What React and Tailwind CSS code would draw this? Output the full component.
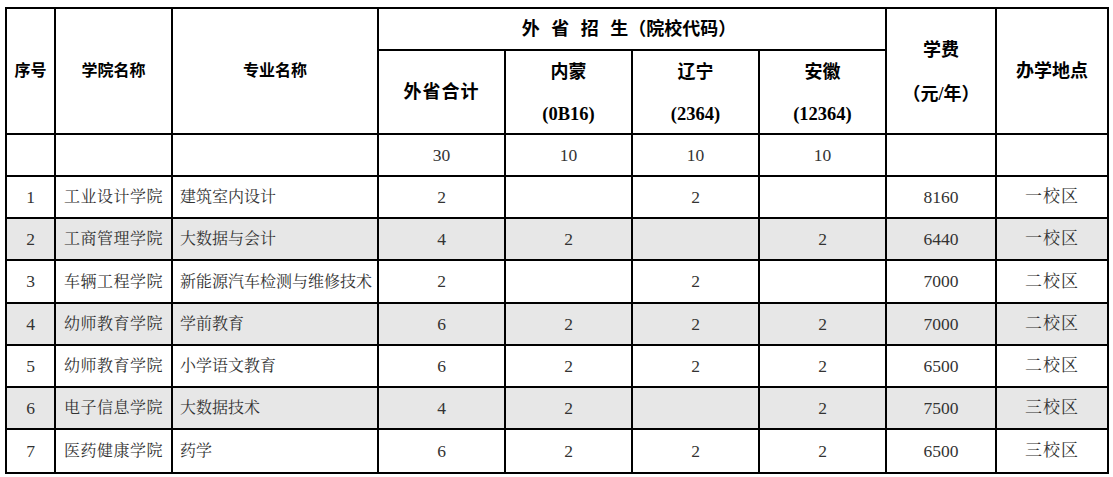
import React from "react";

const rows = [
  ["1", "工业设计学院", "建筑室内设计", "2", "", "2", "", "8160", "一校区"],
  ["2", "工商管理学院", "大数据与会计", "4", "2", "", "2", "6440", "一校区"],
  ["3", "车辆工程学院", "新能源汽车检测与维修技术", "2", "", "2", "", "7000", "二校区"],
  ["4", "幼师教育学院", "学前教育", "6", "2", "2", "2", "7000", "二校区"],
  ["5", "幼师教育学院", "小学语文教育", "6", "2", "2", "2", "6500", "二校区"],
  ["6", "电子信息学院", "大数据技术", "4", "2", "", "2", "7500", "三校区"],
  ["7", "医药健康学院", "药学", "6", "2", "2", "2", "6500", "三校区"],
];

const serif = "font-['Liberation_Serif','Noto_Serif_CJK_SC','Noto_Sans_CJK_SC',serif]";
const heavy = "font-['Liberation_Serif','Noto_Sans_CJK_SC',sans-serif] font-bold";

export default function App() {
  const th = `border-2 border-black text-black text-[18px] text-center align-middle whitespace-nowrap ${heavy}`;
  const td = `border-2 border-black text-[#333] text-[16px] text-center align-middle whitespace-nowrap ${serif}`;

  const cellClass = (j) => {
    if (j === 2) return `${td} !text-left pl-[7px]`;
    if (j === 1) return `${td} tracking-[0.03em]`;
    if (j === 8) return `${td} !text-[17px] tracking-[1px]`;
    return `${td} !text-[17.5px]`;
  };

  return (
    <div className="w-[1113px] h-[477px] bg-white pt-[7px] pl-[5px]">
      <table className="table-fixed border-collapse w-[1102px]">
        <colgroup>
          <col className="w-[49px]" />
          <col className="w-[117px]" />
          <col className="w-[206px]" />
          <col className="w-[127px]" />
          <col className="w-[127px]" />
          <col className="w-[127px]" />
          <col className="w-[127px]" />
          <col className="w-[110px]" />
          <col className="w-[112px]" />
        </colgroup>
        <thead>
          <tr className="h-[42px]">
            <th rowSpan={2} className={`${th} !text-[16px]`}>序号</th>
            <th rowSpan={2} className={`${th} !text-[16px]`}>学院名称</th>
            <th rowSpan={2} className={`${th} !text-[16px]`}>专业名称</th>
            <th colSpan={4} className={`${th} [word-spacing:7px] pr-[6px]`}>外 省 招 生（院校代码）</th>
            <th rowSpan={2} className={th}>
              <div className="flex flex-col items-center gap-[17px] pt-[2px]">
                <span>学费</span>
                <span>（元/年）</span>
              </div>
            </th>
            <th rowSpan={2} className={th}>办学地点</th>
          </tr>
          <tr className="h-[84px]">
            <th className={`${th} tracking-[1px]`}>外省合计</th>
            {[
              ["内蒙", "(0B16)"],
              ["辽宁", "(2364)"],
              ["安徽", "(12364)"],
            ].map(([a, b]) => (
              <th key={a} className={th}>
                <div className="flex flex-col items-center gap-[15px] pt-[4px]">
                  <span>{a}</span>
                  <span className="text-[18.5px]">{b}</span>
                </div>
              </th>
            ))}
          </tr>
        </thead>
        <tbody>
          <tr className="h-[42px]">
            <td className={td}></td>
            <td className={td}></td>
            <td className={td}></td>
            <td className={cellClass(3)}>30</td>
            <td className={cellClass(4)}>10</td>
            <td className={cellClass(5)}>10</td>
            <td className={cellClass(6)}>10</td>
            <td className={td}></td>
            <td className={td}></td>
          </tr>
          {rows.map((r, i) => (
            <tr
              key={r[0]}
              className={`${i === rows.length - 1 ? "h-[44px]" : i === 2 ? "h-[43px]" : "h-[42px]"} ${
                i % 2 === 1 ? "bg-[#e7e7e7]" : "bg-white"
              }`}
            >
              {r.map((c, j) => (
                <td key={j} className={cellClass(j)}>
                  {c}
                </td>
              ))}
            </tr>
          ))}
        </tbody>
      </table>
    </div>
  );
}
